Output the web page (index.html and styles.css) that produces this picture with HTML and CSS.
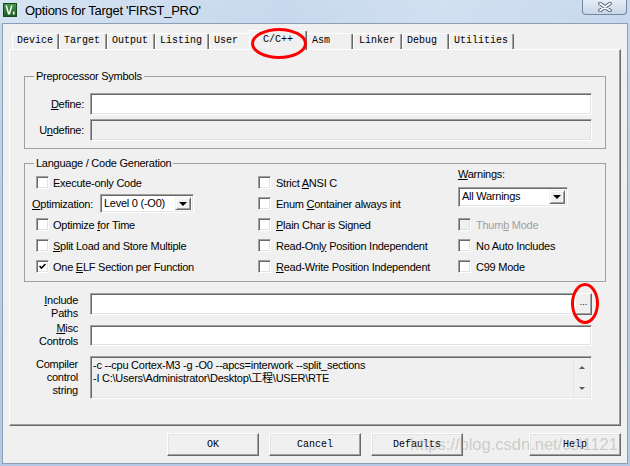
FILE: index.html
```html
<!DOCTYPE html>
<html>
<head>
<meta charset="utf-8">
<title>Options for Target 'FIRST_PRO'</title>
<link rel="stylesheet" href="styles.css">
</head>
<body>
<div class="window">
  <header class="titlebar">
    <svg class="app-icon" viewBox="0 0 14 14">
      <defs>
        <linearGradient id="icg" x1="0" y1="0" x2="0" y2="1">
          <stop offset="0" stop-color="#4a9c50"/>
          <stop offset="1" stop-color="#1c5b25"/>
        </linearGradient>
      </defs>
      <rect x="0.5" y="0.5" width="13" height="13" fill="url(#icg)" stroke="#164a1d"/>
      <path d="M2.5 2.5 L4 2.5 L6 9.5 L8 2.5 L9.5 2.5 L7 11.5 L5 11.5 Z" fill="#fff"/>
      <path d="M9.8 8.5 L11.6 8.5 L11.6 11.6 L9.8 11.6 Z" fill="#dfeedd"/>
    </svg>
    <span class="title">Options for Target 'FIRST_PRO'</span>
    <div class="close">
      <svg width="16" height="10" viewBox="0 0 16 10">
        <path d="M3 1.5 L13 8.5 M13 1.5 L3 8.5" stroke="#4d5b70" stroke-width="3.6" stroke-linecap="round"/>
        <path d="M3 1.5 L13 8.5 M13 1.5 L3 8.5" stroke="#fff" stroke-width="1.8" stroke-linecap="round"/>
      </svg>
    </div>
  </header>

  <main class="client">
    <nav class="tabs">
      <span class="tab t-device">Device</span>
      <span class="tab t-target">Target</span>
      <span class="tab t-output">Output</span>
      <span class="tab t-listing">Listing</span>
      <span class="tab t-user">User</span>
      <span class="tab active">C/C++</span>
      <span class="tab t-asm">Asm</span>
      <span class="tab t-linker">Linker</span>
      <span class="tab t-debug">Debug</span>
      <span class="tab t-util">Utilities</span>
    </nav>

    <section class="panel">
      <fieldset class="group pre">
        <legend>Preprocessor Symbols</legend>
        <div class="sym-grid">
          <label class="rlabel"><u>D</u>efine:</label>
          <div class="edit"></div>
          <label class="rlabel">U<u>n</u>define:</label>
          <div class="edit disabled"></div>
        </div>
      </fieldset>

      <fieldset class="group lang">
        <legend>Language / Code Generation</legend>
        <div class="lang-grid">
          <div class="col col-left">
            <div class="cbrow"><span class="cb"></span><span>Execute-only Code</span></div>
            <div class="optrow"><span class="optlabel"><u>O</u>ptimization:</span>
              <div class="combo combo-opt"><span class="combo-text">Level 0 (-O0)</span><span class="drop"><i></i></span></div>
            </div>
            <div class="cbrow"><span class="cb"></span><span>Optimize <u>f</u>or Time</span></div>
            <div class="cbrow"><span class="cb"></span><span><u>S</u>plit Load and Store Multiple</span></div>
            <div class="cbrow"><span class="cb checked"><svg viewBox="0 0 13 13"><path d="M3 6 L5.2 8.4 L10 3.6" fill="none" stroke="#000" stroke-width="1.8"/></svg></span><span>One <u>E</u>LF Section per Function</span></div>
          </div>
          <div class="col col-mid">
            <div class="cbrow"><span class="cb"></span><span>Strict <u>A</u>NSI C</span></div>
            <div class="cbrow"><span class="cb"></span><span>Enum <u>C</u>ontainer always int</span></div>
            <div class="cbrow"><span class="cb"></span><span><u>P</u>lain Char is Signed</span></div>
            <div class="cbrow"><span class="cb"></span><span>Read-Onl<u>y</u> Position Independent</span></div>
            <div class="cbrow"><span class="cb"></span><span><u>R</u>ead-Write Position Independent</span></div>
          </div>
          <div class="col col-right">
            <div class="warn">
              <div class="warn-label"><u>W</u>arnings:</div>
              <div class="combo combo-warn"><span class="combo-text">All Warnings</span><span class="drop"><i></i></span></div>
            </div>
            <div class="cbrow disabled"><span class="cb"></span><span>Thum<u>b</u> Mode</span></div>
            <div class="cbrow"><span class="cb"></span><span>No Auto Includes</span></div>
            <div class="cbrow"><span class="cb"></span><span>C99 Mode</span></div>
          </div>
        </div>
      </fieldset>

      <div class="paths">
        <label class="rlabel lbl-inc"><u>I</u>nclude<br>Paths</label>
        <div class="inc">
          <div class="edit"></div>
          <div class="browse">...</div>
        </div>
        <label class="rlabel lbl-misc"><u>M</u>isc<br>Controls</label>
        <div class="edit misc"></div>
        <label class="rlabel lbl-cc">Compiler<br>control<br>string</label>
        <div class="ccbox">
          <div class="cc-text">-c --cpu Cortex-M3 -g -O0 --apcs=interwork --split_sections<br>-I C:\Users\Administrator\Desktop\工程\USER\RTE</div>
          <div class="scroll"><i class="up"></i><i class="down"></i></div>
        </div>
      </div>
    </section>

    <div class="buttons">
      <div class="btn">OK</div>
      <div class="btn">Cancel</div>
      <div class="btn">Defaults</div>
      <div class="btn btn-help">Help</div>
    </div>
  </main>

  <div class="watermark">https://blog.csdn.net/csl1121</div>
  <div class="ring ring-tab"></div>
  <div class="ring ring-btn"></div>
</div>
</body>
</html>
```

FILE: styles.css
```css
* { box-sizing: border-box; }
html, body { margin: 0; padding: 0; }
body {
  width: 630px;
  height: 466px;
  overflow: hidden;
  background: #bcd0e8;
  font-family: "Liberation Sans", Arial, "Noto Sans CJK SC", sans-serif;
  font-size: 11px;
  letter-spacing: -0.25px;
  color: #000;
}

.window {
  position: relative;
  width: 630px;
  height: 466px;
  display: flex;
  flex-direction: column;
  background: linear-gradient(180deg, #c8daee 0%, #bbcfe7 40%, #b4c9e3 100%);
}

/* title bar */
.titlebar {
  flex: none;
  height: 23px;
  display: flex;
  align-items: flex-start;
  background: linear-gradient(90deg, rgba(255,255,255,0.25), rgba(255,255,255,0) 45%, rgba(255,255,255,0.18) 70%, rgba(255,255,255,0));
}
.app-icon { flex: none; width: 14px; height: 14px; margin: 3px 0 0 3px; }
.title {
  margin: 3px 0 0 8px;
  font-size: 13px;
  letter-spacing: -0.3px;
  line-height: 15px;
  color: #000;
}
.close {
  margin: 0 3px 0 auto;
  width: 45px;
  height: 15px;
  border: 1px solid #7587a2;
  border-top: 0;
  border-radius: 0 0 4px 4px;
  background: linear-gradient(#e6edf6, #c8d6e8);
  display: flex;
  align-items: center;
  justify-content: center;
}

/* client area */
.client {
  flex: 1;
  margin: 0 2px 2px 2px;
  border: 1px solid #8d9eb6;
  background: #f0f0f0;
  display: flex;
  flex-direction: column;
}

/* tabs */
.tabs {
  flex: none;
  height: 25px;
  display: flex;
  align-items: flex-end;
  padding-left: 9px;
}
.tab {
  height: 16px;
  padding: 0 0 0 4px;
  border-top: 1px solid #fff;
  border-left: 1px solid #fff;
  border-right: 1px solid #696969;
  border-radius: 2px 2px 0 0;
  box-shadow: inset -1px 0 0 #a0a0a0;
  background: #f0f0f0;
  font-family: "Liberation Mono", "DejaVu Sans Mono", monospace;
  font-size: 10px;
  letter-spacing: 0;
  line-height: 14px;
  white-space: nowrap;
}
.t-device { width: 47px; }
.t-target { width: 48px; }
.t-output { width: 48px; }
.t-listing { width: 54px; }
.t-user { width: 42px; }
.t-asm { width: 48px; padding-left: 6px; }
.t-linker { width: 49px; padding-left: 5px; }
.t-debug { width: 47px; }
.t-util { width: 65px; }
.tab.active {
  position: relative;
  z-index: 2;
  width: 58px;
  height: 20px;
  margin: 0 -2px -1px -2px;
  padding: 2px 0 0 0;
  text-align: center;
}

/* tab panel */
.panel {
  flex: none;
  margin-left: 6px;
  width: 612px;
  height: 377px;
  border: 1px solid;
  border-color: #fff #696969 #696969 #fff;
  box-shadow: inset -1px -1px 0 #a0a0a0;
  display: flex;
  flex-direction: column;
}

.group {
  margin: 0 0 0 14px;
  padding: 0 0 7px 0;
  width: 582px;
  min-width: 0;
  border: 1px solid #a0a0a0;
}
.group legend {
  margin-left: 9px;
  padding: 0 2px;
  line-height: 14px;
}
.pre { margin-top: 19px; }
.lang { margin-top: 7px; padding-bottom: 4px; }

.rlabel { text-align: right; line-height: 13px; }

.sym-grid {
  display: grid;
  grid-template-columns: 59px 502px;
  grid-auto-rows: 22px;
  column-gap: 6px;
  row-gap: 4px;
  align-items: center;
  margin-top: 10px;
}

.edit {
  height: 22px;
  background: #fff;
  border: 1px solid;
  border-color: #a0a0a0 #fff #fff #a0a0a0;
  box-shadow: inset 1px 1px 0 #696969, inset -1px -1px 0 #e3e3e3;
}
.edit.disabled { background: #f0f0f0; }
.edit.misc { height: 21px; }

/* language / code generation */
.lang-grid {
  display: grid;
  grid-template-columns: 226px 200px 1fr;
  padding-left: 7px;
  margin-top: 2px;
}
.col {
  display: grid;
  grid-template-rows: repeat(5, 21px);
  align-items: center;
}
.cbrow {
  display: flex;
  align-items: center;
  gap: 5px;
  white-space: nowrap;
}
.col-left .cbrow { padding-left: 4px; gap: 4px; }
.cb {
  flex: none;
  width: 13px;
  height: 13px;
  background: #fff;
  border: 1px solid;
  border-color: #a0a0a0 #fff #fff #a0a0a0;
  box-shadow: inset 1px 1px 0 #696969, inset -1px -1px 0 #e3e3e3;
  position: relative;
}
.cb svg { display: block; width: 11px; height: 11px; }
.cbrow.disabled { color: #a0a0a0; }
.cbrow.disabled .cb { background: #f0f0f0; }

.optrow { display: flex; align-items: center; }
.optlabel { width: 68px; }

.combo {
  display: flex;
  align-items: stretch;
  background: #fff;
  border: 1px solid;
  border-color: #a0a0a0 #fff #fff #a0a0a0;
  box-shadow: inset 1px 1px 0 #696969, inset -1px -1px 0 #e3e3e3;
  padding: 2px;
}
.combo-opt { width: 94px; height: 19px; }
.combo-warn { width: 110px; height: 20px; margin-top: 6px; }
.combo-text { flex: 1; padding-left: 1px; line-height: 13px; white-space: nowrap; }
.drop {
  width: 16px;
  border: 1px solid;
  border-color: #f0f0f0 #696969 #696969 #f0f0f0;
  box-shadow: inset 1px 1px 0 #fff, inset -1px -1px 0 #a0a0a0;
  background: #f0f0f0;
  display: flex;
  align-items: center;
  justify-content: center;
}
.drop i {
  width: 0;
  height: 0;
  border-left: 4px solid transparent;
  border-right: 4px solid transparent;
  border-top: 4px solid #000;
}

.warn { grid-row: span 2; align-self: start; margin-top: -4px; }
.warn-label { line-height: 13px; }

/* include / misc / compiler string */
.paths {
  display: grid;
  grid-template-columns: 68px 502px;
  grid-template-rows: 22px 21px 43px;
  column-gap: 12px;
  row-gap: 10px;
  align-items: start;
  margin-top: 11px;
}
.lbl-inc { margin-top: 1px; }
.lbl-misc { margin-top: -3px; }
.lbl-cc { margin-top: 2px; }

.inc { display: flex; }
.inc .edit { flex: 1; }
.browse {
  flex: none;
  width: 17px;
  height: 22px;
  border: 1px solid;
  border-color: #fff #696969 #696969 #fff;
  box-shadow: inset -1px -1px 0 #a0a0a0;
  background: #f0f0f0;
  font-size: 9px;
  letter-spacing: 0;
  line-height: 16px;
  text-align: center;
}

.ccbox {
  height: 43px;
  display: flex;
  background: #f0f0f0;
  border: 1px solid;
  border-color: #a0a0a0 #fff #fff #a0a0a0;
  box-shadow: inset 1px 1px 0 #696969, inset -1px -1px 0 #e3e3e3;
}
.cc-text {
  flex: 1;
  padding: 2px 0 0 2px;
  line-height: 13px;
  white-space: nowrap;
  overflow: hidden;
}
.scroll {
  flex: none;
  width: 17px;
  margin: 1px 1px 1px 0;
  border-left: 1px solid #e6e6e6;
  display: flex;
  flex-direction: column;
  align-items: center;
  justify-content: space-between;
  padding: 8px 0 7px;
}
.scroll i {
  width: 0;
  height: 0;
  border-left: 3px solid transparent;
  border-right: 3px solid transparent;
}
.scroll .up { border-bottom: 3px solid #5a5a5a; }
.scroll .down { border-top: 3px solid #5a5a5a; }

/* dialog buttons */
.buttons {
  flex: none;
  display: flex;
  justify-content: flex-end;
  gap: 10px;
  margin-top: 7px;
  padding-right: 6px;
}
.btn {
  width: 92px;
  height: 23px;
  border: 1px solid;
  border-color: #fff #696969 #696969 #fff;
  box-shadow: inset -1px -1px 0 #a0a0a0, inset 1px 1px 0 #e3e3e3;
  background: #f0f0f0;
  font-family: "Liberation Mono", "DejaVu Sans Mono", monospace;
  font-size: 10px;
  letter-spacing: 0;
  display: flex;
  align-items: center;
  justify-content: center;
}
.btn-help { margin-left: 56px; }

/* overlays */
.watermark {
  position: absolute;
  z-index: 4;
  left: 410px;
  top: 434px;
  font-size: 16.5px;
  letter-spacing: 0;
  line-height: 20px;
  color: rgba(150, 150, 150, 0.42);
  white-space: nowrap;
  pointer-events: none;
}
.ring {
  position: absolute;
  z-index: 5;
  border: 3px solid #f00;
  border-radius: 50%;
  pointer-events: none;
}
.ring-tab { left: 251px; top: 28px; width: 56px; height: 31px; }
.ring-btn { left: 571px; top: 283px; width: 28px; height: 41px; }
```
